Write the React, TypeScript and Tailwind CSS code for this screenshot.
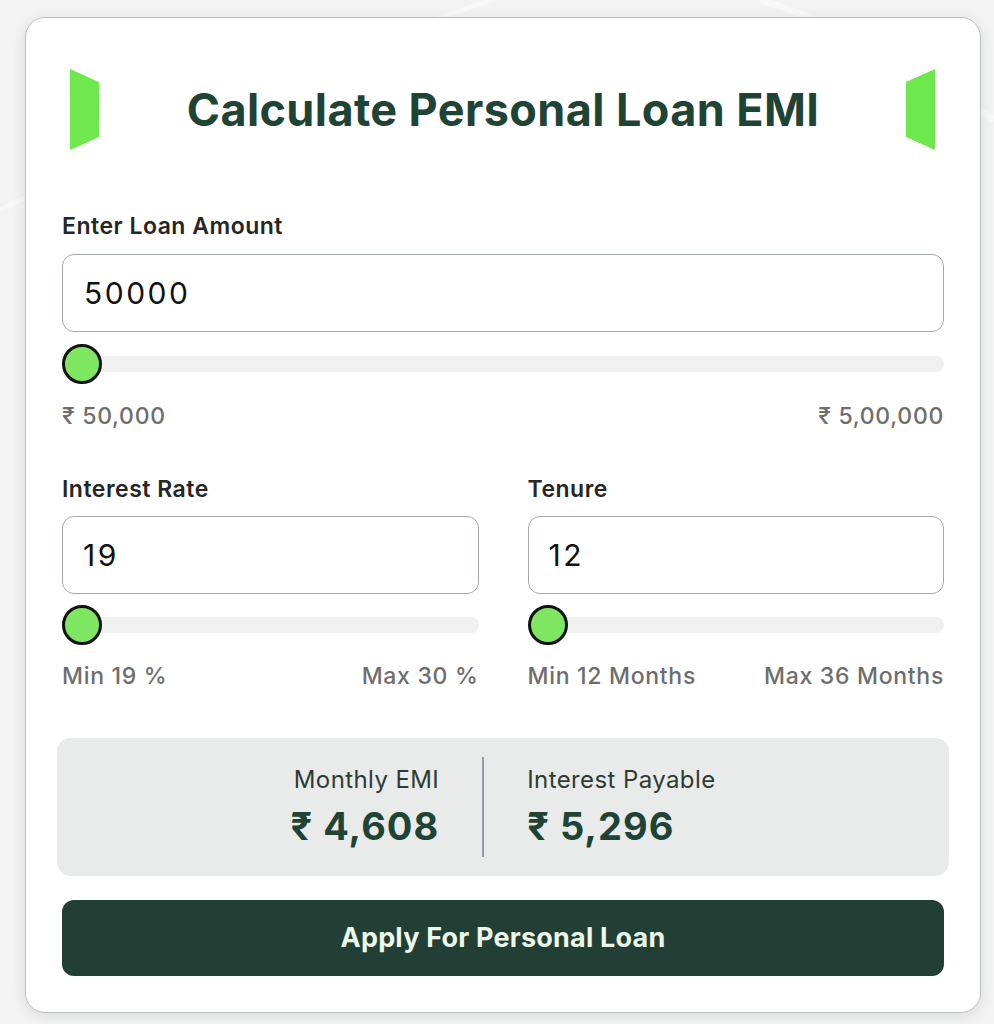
import React from "react";

const font = { fontFamily: "Inter, 'Noto Sans', sans-serif" };

function Slider() {
  return (
    <div className="relative h-[40px] flex items-center">
      <div className="h-[16px] w-full rounded-full bg-[#f0f0f0]" />
      <div className="absolute left-0 top-0 h-[40px] w-[40px] rounded-full border-[3px] border-[#111] bg-[#7ee660]" />
    </div>
  );
}

function Field({ value, className = "" }: { value: string; className?: string }) {
  return (
    <div
      className={
        "h-[78px] rounded-[12px] border-[1.5px] border-[#a3aaa6] bg-white flex items-center text-[30px] tracking-[2.5px] text-[#111] " +
        className
      }
    >
      {value}
    </div>
  );
}

function Flag({ flip = false }: { flip?: boolean }) {
  return (
    <svg width="30" height="81" viewBox="0 0 30 81">
      {flip ? (
        <polygon points="0,13 29,0 29,81 0,68" fill="#6ee84c" />
      ) : (
        <polygon points="0,0 29,13 29,68 0,81" fill="#6ee84c" />
      )}
    </svg>
  );
}

const labelCls = "text-[23px] leading-[28px] font-semibold tracking-[0.5px] text-[#262626]";
const rangeCls = "flex justify-between text-[23px] leading-[28px] font-medium tracking-[0.7px] text-[#6e6e6e]";

export default function App() {
  return (
    <div className="relative min-h-[1024px] w-full bg-[#f2f3f2] overflow-hidden" style={font}>
      <svg className="absolute inset-0 pointer-events-none" width="994" height="1024" viewBox="0 0 994 1024">
        <path d="M0 210 C 120 150, 400 20, 560 -20" stroke="#f7f8f7" strokeWidth="5" fill="none" />
        <path d="M760 0 C 860 30, 950 90, 994 120" stroke="#f7f8f7" strokeWidth="7" fill="none" />
      </svg>
      <div className="relative pt-[17px] pl-[25px]">
        <div className="w-[956px] h-[996px] rounded-[20px] border-[1.5px] border-[#b9c3be] bg-white pt-[51px] px-[36px] shadow-[0_3px_14px_rgba(0,0,0,0.10)]">
          <div className="h-[81px] flex items-center justify-between px-[8px]">
            <Flag />
            <h1 className="text-[45px] font-bold tracking-[0.4px] text-[#1f4335]">Calculate Personal Loan EMI</h1>
            <Flag flip />
          </div>

          <div className={"mt-[62px] " + labelCls}>Enter Loan Amount</div>
          <Field value="50000" className="mt-[14px] pl-[21px]" />
          <div className="mt-[12px]">
            <Slider />
          </div>
          <div className={"mt-[18px] " + rangeCls}>
            <span>₹ 50,000</span>
            <span>₹ 5,00,000</span>
          </div>

          <div className="mt-[45px] grid grid-cols-2 gap-x-[49px]">
            <div>
              <div className={labelCls}>Interest Rate</div>
              <Field value="19" className="mt-[13px] pl-[20px]" />
              <div className="mt-[11px]">
                <Slider />
              </div>
              <div className={"mt-[17px] " + rangeCls}>
                <span>Min 19 %</span>
                <span>Max 30 %</span>
              </div>
            </div>
            <div>
              <div className={labelCls}>Tenure</div>
              <Field value="12" className="mt-[13px] pl-[20px]" />
              <div className="mt-[11px]">
                <Slider />
              </div>
              <div className={"mt-[17px] " + rangeCls}>
                <span>Min 12 Months</span>
                <span>Max 36 Months</span>
              </div>
            </div>
          </div>

          <div className="mt-[48px] -mx-[5px] h-[138px] rounded-[14px] bg-[#e8ebea] flex items-center justify-center gap-[43px]">
            <div className="flex flex-col items-end">
              <span className="text-[24px] leading-[30px] tracking-[0.4px] text-[#2d3b33]">Monthly EMI</span>
              <span className="mt-[8px] text-[38px] leading-[46px] font-bold tracking-[1px] text-[#1f4335]">₹ 4,608</span>
            </div>
            <div className="w-[2px] h-[100px] bg-[#9896ad]" />
            <div className="flex flex-col items-start">
              <span className="text-[24px] leading-[30px] tracking-[0.4px] text-[#2d3b33]">Interest Payable</span>
              <span className="mt-[8px] text-[38px] leading-[46px] font-bold tracking-[1px] text-[#1f4335]">₹ 5,296</span>
            </div>
          </div>

          <button className="mt-[24px] w-full h-[76px] rounded-[12px] bg-[#213f34] text-[27px] font-bold tracking-[0.2px] text-[#eef8ea]">
            Apply For Personal Loan
          </button>
        </div>
      </div>
    </div>
  );
}
